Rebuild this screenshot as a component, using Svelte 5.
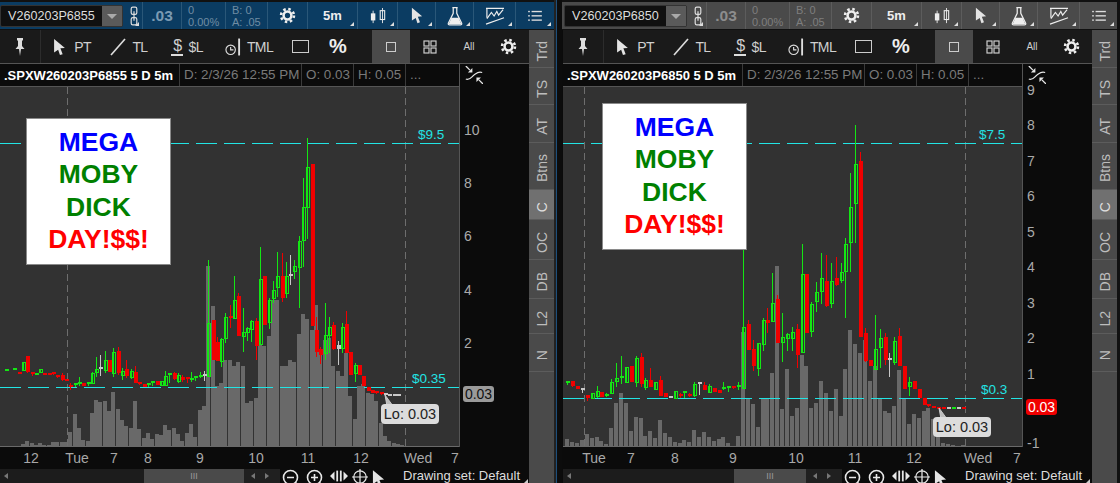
<script>
	// candle rows are [colour, bodyTop, bodyBottom, wickTop, wickBottom] in 1/3 px above a base y
	const seg = (base, rows) =>
		rows.map((r) =>
			r
				? {
						c: r[0],
						top: base + r[1] / 3,
						bot: base + r[2] / 3,
						hi: base + (r[3] ?? r[1]) / 3,
						lo: base + (r[4] ?? r[2]) / 3
					}
				: null
		);

	const leftCandles = [
		...seg(340, [
			['g', 91, 91], null, ['g', 88, 88], ['r', 100, 100], ['g', 65, 90], ['r', 48, 97, 48, 100],
			['r', 100, 107], ['g', 102, 102], ['g', 88, 98], ['r', 102, 102], ['r', 103, 103], ['r', 100, 106],
			['r', 108, 114], ['r', 104, 118, 100, 122], ['r', 121, 121], ['r', 138, 138, 130, 150],
			['g', 133, 137, 128, 140], ['g', 128, 134, 112, 138], ['r', 128, 138], ['g', 130, 137],
			['g', 100, 130, 97, 130], ['g', 88, 98, 50, 112], ['w', 85, 85, 45, 108], ['g', 60, 90, 33, 98],
			['r', 60, 95], ['g', 36, 98, 25, 112], ['r', 33, 98, 22, 105], ['g', 94, 106, 85, 120],
			['r', 88, 110, 60, 115], ['g', 93, 110, 88, 118], ['r', 95, 128, 78, 128], ['r', 128, 135],
			['r', 132, 140], ['g', 132, 137, 128, 140], ['g', 127, 132, 123, 137], ['r', 124, 135],
			['g', 122, 134], ['g', 108, 134, 92, 136], ['g', 102, 107, 100, 128], ['r', 100, 118, 95, 120],
			['g', 105, 122, 100, 128], ['r', 110, 118, 105, 125], ['r', 115, 120, 110, 130],
			['g', 118, 124, 96, 127], ['g', 111, 116, 108, 122], ['g', 108, 113, 96, 114], ['w', 105, 105, 93, 122]
		]),
		...seg(130, [
			['g', 580, 738, 390, 738], ['r', 570, 690], ['r', 635, 692, 620, 692], ['g', 627, 692, 625, 710],
			['g', 562, 625, 548, 640], ['r', 560, 562, 525, 593], ['g', 510, 563, 437, 563], ['r', 497, 618, 490, 618],
			['g', 605, 617, 535, 665], ['g', 595, 608, 590, 632], ['g', 574, 598, 570, 635], ['r', 574, 650, 565, 690],
			['g', 448, 644, 350, 644], ['r', 438, 585], ['g', 511, 578, 505, 598], ['g', 481, 505, 453, 520],
			['g', 439, 472, 365, 500], ['r', 438, 505, 370, 515], ['g', 438, 490, 395, 505], ['w', 436, 436, 375, 465],
			['g', 408, 424, 390, 447], ['g', 334, 412, 318, 535], ['g', 232, 331, 145, 410], ['g', 112, 232, 25, 328],
			['r', 102, 587], ['r', 600, 665, 560, 680], ['r', 657, 675, 650, 703], ['g', 616, 670, 518, 690],
			['g', 592, 616, 560, 670], ['r', 585, 656, 575, 660], ['w', 645, 656, 632, 705], ['g', 592, 655, 580, 668],
			['r', 582, 668, 543, 668], ['r', 666, 735], ['g', 705, 729, 699, 756], ['r', 705, 735]
		]),
		...seg(340, [
			['r', 108, 138], ['r', 140, 152], ['r', 150, 160], ['r', 157, 162], ['r', 160, 165], ['w', 163, 163],
			['w', 166, 166], ['w', 165, 165], ['w', 166, 166]
		])
	];

	const leftVols = [
		0, 0, 0, 0, 2, 5, 3, 1, 3, 1, 1, 4, 4, 4, 4, 14, 32, 18, 6, 5, 33, 46, 44, 45, 35, 54, 37, 26, 20, 18, 45, 17, 8,
		13, 7, 12, 11, 21, 16, 18, 12, 5, 13, 22, 9, 36, 40, 180, 140, 60, 63, 86, 86, 80, 84, 80, 43, 45, 48, 101, 100,
		110, 146, 146, 80, 80, 86, 84, 112, 132, 127, 116, 141, 96, 106, 108, 80, 75, 70, 93, 50, 27, 60, 62, 53, 52, 45,
		23, 10, 5, 3, 2, 1
	];

	const rightCandles = [
		...seg(340, [
			['g', 127, 127, 122, 135], ['r', 124, 140], ['r', 137, 146], ['w', 147, 147, 147, 160],
			['r', 165, 175, 165, 182], ['g', 160, 175], ['g', 153, 168, 138, 175], ['r', 156, 172],
			['g', 165, 172, 158, 172], ['g', 126, 160, 118, 160], ['g', 115, 124, 70, 140], ['g', 112, 118, 48, 132],
			['g', 80, 125], ['r', 78, 125], ['g', 55, 128, 48, 140], ['r', 50, 132, 40, 140], ['g', 120, 140, 115, 150],
			['r', 120, 140, 85, 140], ['g', 127, 147], ['r', 120, 167, 108, 167], ['r', 160, 172], ['w', 172, 172],
			['g', 154, 175], ['r', 165, 165, 158, 174], ['g', 157, 157, 153, 175], ['r', 165, 165, 160, 172],
			['g', 133, 167, 125, 170], ['w', 130, 130, 125, 165], ['r', 135, 150, 125, 150], ['g', 138, 155, 132, 160],
			['r', 143, 155], ['r', 150, 160], ['g', 145, 148, 125, 150], ['g', 142, 147, 142, 155], ['r', 140, 147],
			['g', 137, 137, 125, 150]
		]),
		...seg(120, [
			['g', 620, 802, 388, 805], ['r', 612, 690, 600, 690], ['r', 688, 740, 660, 752], ['g', 670, 745, 670, 768],
			['g', 600, 673, 595, 692], ['r', 600, 608, 565, 638], ['g', 550, 603, 460, 603], ['r', 537, 670, 525, 670],
			['g', 652, 667, 580, 725], ['g', 643, 655, 640, 692], ['g', 635, 652, 620, 692], ['r', 628, 705, 612, 745],
			['g', 463, 697, 372, 697], ['r', 462, 640], ['g', 553, 635, 545, 652], ['g', 517, 545, 487, 575],
			['g', 475, 515, 400, 552], ['r', 484, 560, 405, 560], ['g', 484, 550, 430, 565], ['r', 475, 497, 412, 497],
			['g', 455, 478, 430, 490], ['g', 373, 455, 355, 595], ['g', 262, 368, 158, 455], ['g', 132, 250, 15, 368],
			['r', 123, 650, 97, 650], ['r', 640, 725, 625, 725], ['r', 720, 737], ['g', 688, 747, 585, 747],
			['g', 655, 682, 628, 745], ['r', 652, 720, 640, 735], ['w', 718, 718, 700, 770], ['g', 663, 725, 650, 735],
			['r', 648, 738, 625, 738], ['r', 738, 807], ['g', 787, 800, 770, 828], ['r', 783, 808], ['r', 808, 835]
		]),
		...seg(340, [
			['r', 175, 195], ['r', 195, 200], ['r', 201, 201], ['r', 204, 204], ['r', 204, 204], ['w', 204, 204],
			['g', 204, 204], ['w', 204, 204], ['r', 204, 204]
		])
	];

	const rightVols = [
		7, 4, 3, 6, 12, 8, 9, 5, 2, 18, 43, 53, 43, 15, 29, 28, 10, 15, 8, 26, 13, 9, 4, 3, 6, 4, 16, 9, 14, 9, 5, 7, 9, 3,
		0, 10, 114, 48, 42, 19, 47, 48, 73, 180, 37, 77, 30, 38, 91, 80, 38, 43, 65, 53, 35, 57, 30, 77, 116, 102, 93, 106,
		65, 80, 48, 35, 33, 40, 76, 47, 22, 32, 28, 35, 38, 27, 10, 3, 2, 1, 0, 1
	];

	const panels = [
		{
			tone: 'blue',
			x0: 0,
			start: 5.67,
			pitch: 4.31,
			symbol: 'V260203P6855',
			title: '.SPXW260203P6855 5 D 5m',
			candles: leftCandles,
			vols: leftVols,
			dayLines: [67, 405],
			levels: [
				{ y: 143, label: '$9.5', x: 418, ly: 139 },
				{ y: 387, label: '$0.35', x: 412, ly: 383 }
			],
			note: { x: 26, y: 31 },
			lo: { x: 381, y: 404, px: 385, py: 395 },
			prices: [['10', 130], ['8', 183], ['6', 236], ['4', 290], ['2', 343]],
			tag: { y: 386, red: false },
			times: [['12', 31], ['Tue', 77], ['7', 114], ['8', 148], ['9', 200], ['10', 256], ['11', 308], ['12', 361], ['Wed', 418], ['7', 455]],
			track: 144,
			thumb: 100
		},
		{
			tone: 'grey',
			x0: 563,
			start: 567.3,
			pitch: 4.88,
			symbol: 'V260203P6850',
			title: '.SPXW260203P6850 5 D 5m',
			candles: rightCandles,
			vols: rightVols,
			dayLines: [584, 965],
			levels: [
				{ y: 143, label: '$7.5', x: 979, ly: 139 },
				{ y: 398, label: '$0.3', x: 981, ly: 394 }
			],
			note: { x: 39, y: 16 },
			lo: { x: 933, y: 417, px: 939, py: 408 },
			prices: [['9', 90], ['8', 125], ['7', 161], ['6', 196], ['5', 232], ['4', 267], ['3', 303], ['2', 338], ['1', 374], ['-1', 443]],
			tag: { y: 399, red: true },
			times: [['Tue', 31], ['7', 68], ['8', 112], ['9', 170], ['10', 233], ['11', 292], ['12', 351], ['Wed', 415], ['7', 454]],
			track: 171,
			thumb: 72
		}
	];

	const tabs = [
		['Trd', 38, false], ['TS', 37, false], ['AT', 38, false], ['Btns', 47, false], ['C', 30, true],
		['OC', 40, false], ['DB', 39, false], ['L2', 35, false], ['N', 38, false]
	];

	const wick = { g: '#14e614', r: '#f00000', w: '#c8c8c8' };
</script>

{#snippet gear(size)}
	<svg width={size} height={size} viewBox="0 0 20 20">
		<circle cx="10" cy="10" r="4.6" fill="none" stroke="#eee" stroke-width="3" />
		<circle cx="10" cy="10" r="7.6" fill="none" stroke="#eee" stroke-width="3" stroke-dasharray="2.9 3.07" />
	</svg>
{/snippet}

{#snippet cursor(w, h)}
	<svg width={w} height={h} viewBox="0 0 14 20">
		<path d="M1 1 L13 11 L8 11.5 L10.5 18 L7.5 19 L5.5 13 L1 16 Z" fill="#e4e4e4" />
	</svg>
{/snippet}

{#snippet lens(mark)}
	<svg width="20" height="20" viewBox="0 0 20 20" fill="none" stroke="#e8e8e8" stroke-width="1.6">
		<circle cx="8.5" cy="8.5" r="7" />
		<path d="M13.5 13.5 L18 19 M5 8.5 H12" />
		{#if mark}<path d="M8.5 5 V12" />{/if}
	</svg>
{/snippet}

{#snippet squeeze()}
	<svg width="18" height="18" viewBox="0 0 22 22">
		<path d="M1 16 C6 18 8 13 11 11 C14 9 16 6 21 8" fill="none" stroke="#e8e8e8" stroke-width="1.4" />
		<path d="M9 8 H3.5 L9 2.5 Z" fill="#e8e8e8" />
		<path d="M1 0 L6 5" stroke="#e8e8e8" stroke-width="1.6" />
		<path d="M14 14 H19.5 L14 19.5 Z" fill="#e8e8e8" />
		<path d="M22 22 L17 17" stroke="#e8e8e8" stroke-width="1.6" />
	</svg>
{/snippet}

<div class="screen">
	{#each panels as p}
		<section class="panel {p.tone}">
			<header class="topbar">
				<div class="symbol">
					<span class="sym-text">{p.symbol}</span>
					<span class="drop"><i></i></span>
				</div>
				<div class="cell corner link">
					<svg width="8" height="22" viewBox="0 0 10 24" fill="none" stroke="#ddd" stroke-width="1.5">
						<rect x="1.5" y="1" width="7" height="9" rx="2" />
						<rect x="1.5" y="14" width="7" height="9" rx="2" />
						<path d="M5 6 V18" />
					</svg>
				</div>
				<div class="cell last">.03</div>
				<div class="cell pair w44"><span>0</span><span>0.00%</span></div>
				<div class="cell pair w42"><span>B: 0</span><span>A: .05</span></div>
				<div class="cell w40">{@render gear(17)}</div>
				<div class="cell corner w50 period">5m</div>
				<div class="cell corner w40">
					<svg width="16" height="18" viewBox="0 0 18 20" fill="#eee">
						<rect x="1" y="7" width="5" height="8" />
						<rect x="3" y="4" width="1" height="14" />
						<rect x="11.5" y="4" width="5" height="10" fill="none" stroke="#eee" stroke-width="1.2" />
						<rect x="13.5" y="1" width="1" height="17" />
					</svg>
				</div>
				<div class="cell corner w38">{@render cursor(12, 17)}</div>
				<div class="cell corner w38">
					<svg width="16" height="20" viewBox="0 0 18 22">
						<path d="M6 1.5 H12 M7 2 V8 L1.5 19 Q1 21 3 21 H15 Q17 21 16.5 19 L11 8 V2" fill="none" stroke="#eee" stroke-width="1.4" />
						<path d="M5 13 H13 L16 20 H2 Z" fill="#eee" />
					</svg>
				</div>
				<div class="cell corner w42">
					<svg width="20" height="18" viewBox="0 0 22 20" fill="none" stroke="#eee" stroke-width="1.3">
						<path d="M1 1.5 H21 M2 13 L7 6 L10 10 L13 5 L15 9 L20 3 M1 19 L21 12" />
						<path d="M2 2 V12" />
					</svg>
				</div>
				<div class="cell corner grow">
					<svg width="14" height="12" viewBox="0 0 16 14" fill="#ddd">
						<rect x="0" y="1" width="2" height="1.6" /><rect x="4" y="1" width="12" height="1.6" />
						<rect x="0" y="6" width="2" height="1.6" /><rect x="4" y="6" width="12" height="1.6" />
						<rect x="0" y="11" width="2" height="1.6" /><rect x="4" y="11" width="12" height="1.6" />
					</svg>
				</div>
			</header>

			<div class="body">
				<div class="main">
					<nav class="tools">
						<div class="tool pin">
							<svg width="10" height="20" viewBox="0 0 10 20" fill="#ddd">
								<path d="M2 1 H8 V3 L7 4 V9 L9.5 12 H6 L5 19 L4 12 H0.5 L3 9 V4 L2 3 Z" />
							</svg>
						</div>
						<div class="tool t-pt">{@render cursor(13, 18)}<span>PT</span></div>
						<div class="tool t-tl">
							<svg width="16" height="18" viewBox="0 0 16 18"><path d="M1 17 L15 1" stroke="#ddd" stroke-width="1.7" /></svg>
							<span>TL</span>
						</div>
						<div class="tool t-sl"><b class="dollar">$</b><span>$L</span></div>
						<div class="tool t-tml">
							<svg width="16" height="20" viewBox="0 0 17 20" fill="none" stroke="#ddd" stroke-width="1.2">
								<circle cx="6" cy="13" r="5" />
								<path d="M6 10 V13 H9" />
								<path d="M15 1 V19" stroke-width="2" />
							</svg>
							<span>TML</span>
						</div>
						<div class="tool t-rect"><i class="rect"></i></div>
						<div class="tool t-pct">%</div>
						<div class="tool view active"><i class="square"></i></div>
						<div class="tool view grid">
							<svg width="14" height="14" viewBox="0 0 14 14" fill="none" stroke="#ccc" stroke-width="1.2">
								<rect x="1" y="1" width="5" height="5" /><rect x="8" y="1" width="5" height="5" />
								<rect x="1" y="8" width="5" height="5" /><rect x="8" y="8" width="5" height="5" />
							</svg>
						</div>
						<div class="tool view all">All</div>
						<div class="tool view wide">{@render gear(17)}</div>
					</nav>

					<div class="middle">
						<div class="left-col">
							<div class="info">
								<span class="title">{p.title}</span>
								<span class="field date">D: 2/3/26 12:55 PM</span>
								<span class="field o">O: 0.03</span>
								<span class="field h">H: 0.05</span>
								<span class="field more">...</span>
							</div>
							<div class="plot">
								<svg width="459" height="359" viewBox="{p.x0} 87 459 359" shape-rendering="crispEdges">
									{#each p.vols as v, i}
										{#if v > 0}
											<rect x={Math.round(p.start + i * p.pitch) - 2} y={446 - v} width="4" height={v} fill="#696969" />
										{/if}
									{/each}
									{#each p.dayLines as x}
										<line x1={x + 0.5} x2={x + 0.5} y1="87" y2="446" stroke="#6e6e6e" stroke-dasharray="7 4" />
									{/each}
									{#each p.levels as l}
										<line x1={p.x0} x2={p.x0 + 459} y1={l.y + 0.5} y2={l.y + 0.5} stroke="#22e4e4" stroke-dasharray="21 7" />
									{/each}
									{#each p.candles as c, i}
										{#if c}
											{@const cx = Math.round(p.start + i * p.pitch)}
											<line x1={cx + 0.5} x2={cx + 0.5} y1={c.hi} y2={c.lo} stroke={wick[c.c]} />
											{#if c.bot - c.top < 2.5}
												<rect x={cx - 1} y={Math.round(c.top) - 1} width="4" height="2" fill={wick[c.c]} />
											{:else if c.c === 'g'}
												<rect x={cx - 0.5} y={Math.round(c.top) + 0.5} width="3" height={Math.round(c.bot - c.top)} fill="none" stroke={wick.g} />
											{:else}
												<rect x={cx - 1} y={Math.round(c.top)} width="4" height={Math.round(c.bot - c.top)} fill={wick[c.c]} />
											{/if}
										{/if}
									{/each}
									{#each p.levels as l}
										<text class="level" x={l.x} y={l.ly} shape-rendering="auto">{l.label}</text>
									{/each}
									<path d="M{p.lo.px} {p.lo.py} L{p.lo.px + 2} {p.lo.y + 2} L{p.lo.px + 8} {p.lo.y + 2} Z" fill="#bbb" stroke="#ccc" shape-rendering="auto" />
									<rect x={p.lo.x} y={p.lo.y} width="58" height="20" rx="4" fill="#dcdcdc" shape-rendering="auto" />
									<text class="lo" x={p.lo.x + 29} y={p.lo.y + 15}>Lo: 0.03</text>
								</svg>
								<div class="note" style="left: {p.note.x}px; top: {p.note.y}px;">
									<span class="blue-t">MEGA</span>
									<span class="green-t">MOBY</span>
									<span class="green-t">DICK</span>
									<span class="red-t">DAY!$$!</span>
								</div>
							</div>
						</div>
						<div class="axis">
							<div class="squeeze">{@render squeeze()}</div>
							{#each p.prices as [label, y]}
								<span class="price" style="top: {y - 64 - 9}px;">{label}</span>
							{/each}
							<span class="tag" class:red={p.tag.red} style="top: {p.tag.y - 64}px;">0.03</span>
						</div>
					</div>

					<div class="times">
						{#each p.times as [label, x]}
							<span style="left: {x}px;">{label}</span>
						{/each}
					</div>

					<div class="scroll">
						<div class="track" style="width: {p.track}px;"><i class="arrow l"></i></div>
						<div class="thumb" style="width: {p.thumb}px;">III</div>
						<div class="track tail"><i class="arrow l"></i><i class="arrow r"></i></div>
						<div class="nav">
							{@render lens(false)}
							{@render lens(true)}
							<svg width="18" height="14" viewBox="0 0 20 14" fill="#e8e8e8">
								<path d="M0 7 L5 2 V12 Z M20 7 L15 2 V12 Z" />
								<rect x="7" y="1" width="2" height="12" /><rect x="11" y="1" width="2" height="12" />
							</svg>
							<svg width="16" height="16" viewBox="0 0 18 18" fill="none" stroke="#e8e8e8" stroke-width="1.4">
								<circle cx="9" cy="9" r="7" /><path d="M9 0 V18 M0 9 H18" />
							</svg>
							{@render cursor(13, 19)}
						</div>
						<span class="drawing">Drawing set: Default</span>
						<i class="set-corner"></i>
					</div>
				</div>

				<aside class="side">
					{#each tabs as [name, h, on]}
						<div class="tab" class:on style="height: {h}px;"><span>{name}</span></div>
					{/each}
				</aside>
			</div>
		</section>
		{#if p.tone === 'blue'}<div class="gutter"></div>{/if}
	{/each}
</div>

<style>
	:global(body) {
		margin: 0;
		background: #111;
	}

	.screen {
		display: flex;
		width: 1120px;
		height: 483px;
		overflow: hidden;
		font-family: 'Liberation Sans', Arial, sans-serif;
		background: #111;
	}

	.panel {
		display: flex;
		flex-direction: column;
		padding-top: 2px;
		height: 481px;
	}

	.panel.blue {
		width: 554px;
		--bar: #0b3c62;
		--rule: #2a5778;
		--dim: #7b9ab2;
		--pair: #6f8ca3;
	}

	.panel.grey {
		width: 555px;
		--bar: #4a4a4a;
		--rule: #5c5c5c;
		--dim: #8d8d8d;
		--pair: #7e7e7e;
	}

	.gutter {
		width: 8px;
		background: linear-gradient(90deg, #222 0 2px, #1d4f7c 2px 3px, #0c0c0c 3px);
	}

	.topbar {
		display: flex;
		height: 27px;
		background: var(--bar);
		flex: none;
	}

	.symbol {
		width: 123px;
		margin: 3px 2px 2px 0;
		background: #101010;
		display: flex;
		align-items: center;
		justify-content: space-between;
		border: 1px solid #333;
		border-radius: 2px;
		box-sizing: border-box;
		padding-left: 7px;
		color: #ddd;
		font-size: 12.6px;
	}

	.grey .symbol {
		margin-left: 2px;
	}

	.drop {
		width: 20px;
		height: 100%;
		background: #5a5a5a;
		display: flex;
		align-items: center;
		justify-content: center;
	}

	.drop i {
		border: 5px solid transparent;
		border-top: 5px solid #aaa;
		border-bottom: 0;
	}

	.cell {
		position: relative;
		display: flex;
		align-items: center;
		justify-content: center;
		border-right: 1px solid var(--rule);
		box-sizing: border-box;
		color: #eee;
	}

	.corner::after {
		content: '';
		position: absolute;
		right: 3px;
		bottom: 3px;
		border-left: 4px solid transparent;
		border-bottom: 4px solid #ddd;
	}

	.link {
		width: 18px;
	}

	.last {
		width: 39px;
		color: var(--dim);
		font-weight: bold;
		font-size: 15.5px;
	}

	.pair {
		flex-direction: column;
		align-items: flex-start;
		padding-left: 6px;
		color: var(--pair);
		font-size: 11px;
		line-height: 12px;
	}

	.w44 {
		width: 44px;
	}

	.w42 {
		width: 42px;
	}

	.w40 {
		width: 40px;
	}

	.w50 {
		width: 50px;
	}

	.w38 {
		width: 38px;
	}

	.grow {
		flex: 1;
		border-right: 0;
	}

	.period {
		font-size: 13px;
		font-weight: bold;
	}

	.body {
		flex: 1;
		display: flex;
		min-height: 0;
		margin-top: 1px;
	}

	.main {
		width: 529px;
		display: flex;
		flex-direction: column;
		background: #0b0b0b;
	}

	.grey .main {
		width: 530px;
		box-sizing: border-box;
		padding-left: 1px;
	}

	.tools {
		height: 33px;
		flex: none;
		display: flex;
		align-items: stretch;
		background: #1a1a1a;
		border-bottom: 1px solid #555;
		color: #cfcfcf;
		font-size: 14px;
		letter-spacing: -0.6px;
	}

	.tool {
		display: flex;
		align-items: center;
		justify-content: center;
		gap: 6px;
		box-sizing: border-box;
	}

	.pin {
		width: 41px;
		border-right: 1px solid #2c2c2c;
	}

	.t-pt {
		width: 62px;
		gap: 8px;
	}

	.t-tl {
		width: 52px;
	}

	.t-sl {
		width: 64px;
		gap: 5px;
	}

	.t-tml {
		width: 60px;
	}

	.t-rect {
		width: 42px;
	}

	.t-pct {
		width: 51px;
		padding-right: 17px;
		font-weight: bold;
		font-size: 20px;
		letter-spacing: 0;
		color: #eee;
	}

	.dollar {
		font-weight: normal;
		font-size: 16px;
		line-height: 17px;
		border-bottom: 2px solid #ddd;
		padding: 0 2px;
	}

	.rect {
		width: 15px;
		height: 11px;
		border: 1px solid #ccc;
	}

	.view {
		width: 38px;
	}

	.grid {
		width: 40px;
	}

	.active {
		background: #4a4a4a;
	}

	.square {
		width: 8px;
		height: 8px;
		border: 1px solid #ccc;
		box-sizing: content-box;
	}

	.all {
		font-size: 10px;
		letter-spacing: 0;
	}

	.wide {
		width: 41px;
	}

	.middle {
		display: flex;
		height: 383px;
		flex: none;
	}

	.left-col {
		width: 459px;
		display: flex;
		flex-direction: column;
		flex: none;
	}

	.info {
		height: 22px;
		flex: none;
		display: flex;
		align-items: center;
		background: #0b0b0b;
		border-bottom: 1px solid #555;
		font-size: 13.4px;
		color: #7a7a7a;
		white-space: nowrap;
	}

	.title {
		width: 179px;
		box-sizing: border-box;
		padding-left: 4px;
		color: #fff;
		font-weight: bold;
		font-size: 13px;
	}

	.field {
		box-sizing: border-box;
		border-left: 1px solid #3a3a3a;
		padding-left: 4px;
		line-height: 22px;
	}

	.date {
		width: 122px;
	}

	.o {
		width: 52px;
	}

	.h {
		width: 52px;
	}

	.more {
		flex: 1;
	}

	.plot {
		position: relative;
		height: 360px;
		background: #323232;
		border-bottom: 1px solid #6a6a6a;
		box-sizing: border-box;
	}

	.plot svg {
		display: block;
	}

	.level {
		fill: #22e4e4;
		font-size: 13.5px;
	}

	.lo {
		fill: #222;
		font-size: 14.5px;
		text-anchor: middle;
	}

	.note {
		position: absolute;
		width: 145px;
		height: 147px;
		box-sizing: border-box;
		background: #fff;
		border: 1px solid #8a8a8a;
		padding-top: 7px;
		display: flex;
		flex-direction: column;
		align-items: center;
		font-weight: bold;
		font-size: 26.5px;
		line-height: 32.4px;
	}

	.blue-t {
		color: #0000ff;
	}

	.green-t {
		color: #008000;
	}

	.red-t {
		color: #ff0000;
	}

	.axis {
		position: relative;
		flex: 1;
		background: #0b0b0b;
		border-left: 1px solid #555;
		box-sizing: border-box;
	}

	.squeeze {
		position: absolute;
		left: 5px;
		top: 2px;
	}

	.price {
		position: absolute;
		left: 4px;
		color: #aaa;
		font-size: 14px;
		line-height: 18px;
	}

	.tag {
		position: absolute;
		left: 3px;
		width: 31px;
		height: 16px;
		border-radius: 3px;
		background: #9a9a9a;
		color: #111;
		font-size: 14px;
		line-height: 16px;
		text-align: center;
	}

	.tag.red {
		background: #f00000;
		color: #fff;
	}

	.times {
		position: relative;
		height: 22px;
		flex: none;
		color: #a8a8a8;
		font-size: 14px;
		line-height: 22px;
	}

	.times span {
		position: absolute;
		transform: translateX(-50%);
	}

	.scroll {
		display: flex;
		height: 14px;
		flex: 1;
		align-items: center;
		color: #ddd;
	}

	.track {
		height: 14px;
		background: #1c1c1c;
		display: flex;
		align-items: center;
		gap: 10px;
		padding-left: 4px;
		box-sizing: border-box;
	}

	.tail {
		width: 36px;
		padding-left: 7px;
		background: #202020;
	}

	.thumb {
		height: 14px;
		background: #4a4a4a;
		color: #999;
		font-size: 9px;
		line-height: 14px;
		text-align: center;
	}

	.arrow {
		border: 3px solid transparent;
		border-left-width: 0;
		border-right: 4px solid #777;
	}

	.arrow.r {
		border-right-width: 0;
		border-left: 4px solid #777;
	}

	.nav {
		display: flex;
		align-items: flex-start;
		gap: 4px;
		height: 14px;
		padding-left: 2px;
		overflow: hidden;
		width: 123px;
		box-sizing: border-box;
		flex: none;
	}

	.drawing {
		font-size: 13px;
		line-height: 14px;
		white-space: nowrap;
		color: #ddd;
	}

	.set-corner {
		margin: 9px 0 0 4px;
		border-left: 4px solid transparent;
		border-bottom: 4px solid #ccc;
	}

	.side {
		width: 25px;
		background: #4a4a4a;
		flex: none;
	}

	.tab {
		display: flex;
		align-items: center;
		justify-content: center;
		box-sizing: border-box;
		border-bottom: 1px solid #5c5c5c;
		padding-top: 5px;
		color: #bdbdbd;
		font-size: 14px;
	}

	.tab span {
		writing-mode: vertical-rl;
		transform: rotate(180deg);
	}

	.tab.on {
		background: #707070;
		color: #ddd;
	}
</style>
